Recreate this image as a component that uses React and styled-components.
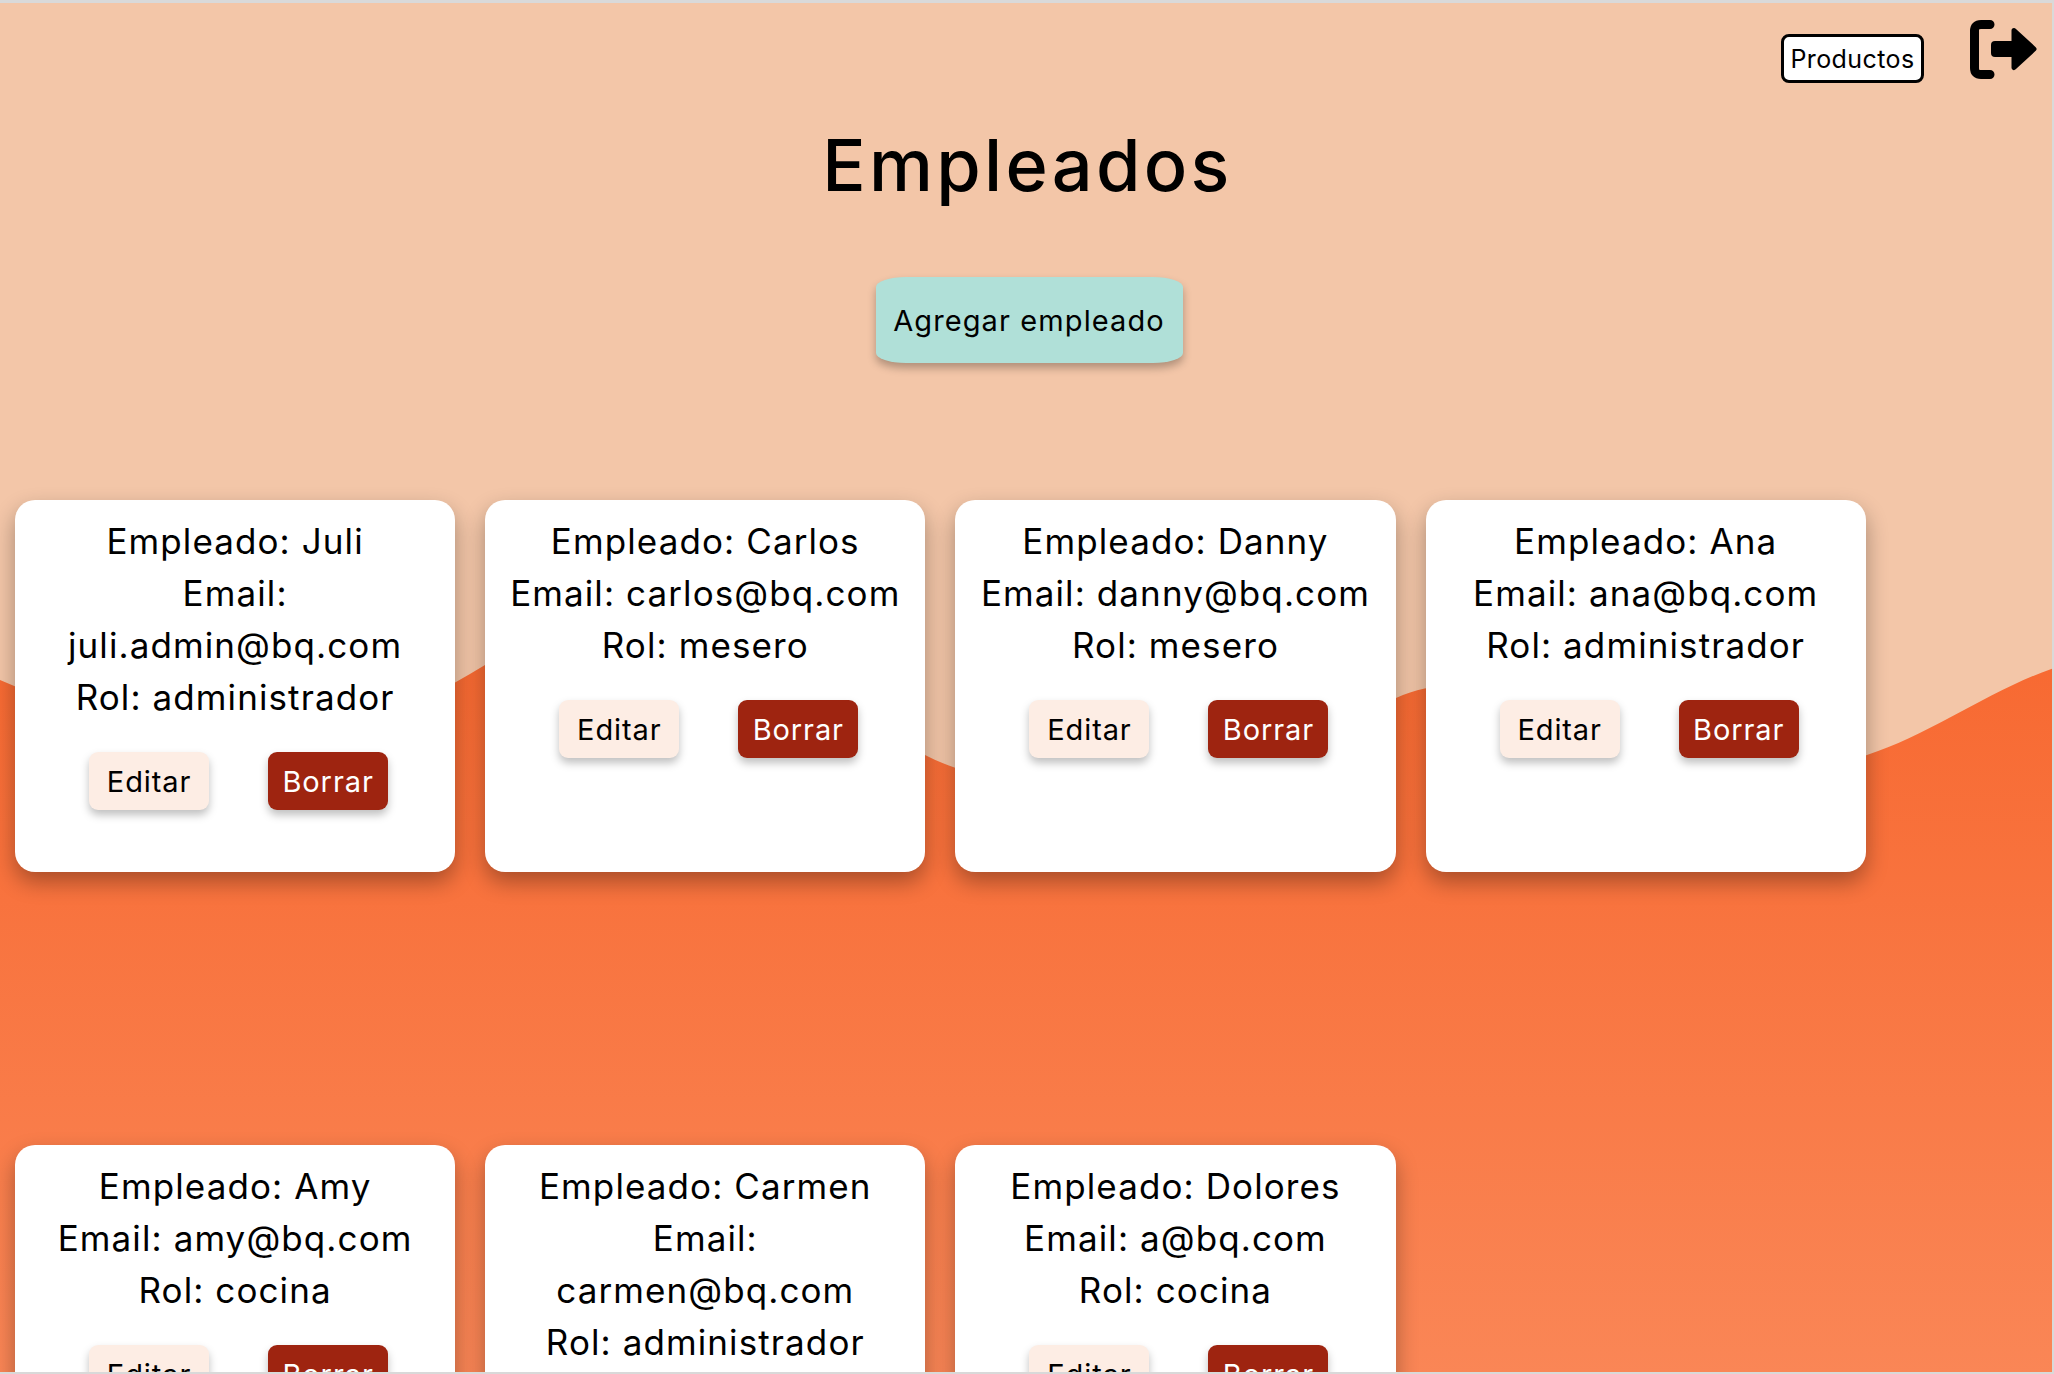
import React from 'react'
import styled, { createGlobalStyle } from 'styled-components'

const employees = [
  { name: 'Juli', email: 'juli.admin@bq.com', role: 'administrador' },
  { name: 'Carlos', email: 'carlos@bq.com', role: 'mesero' },
  { name: 'Danny', email: 'danny@bq.com', role: 'mesero' },
  { name: 'Ana', email: 'ana@bq.com', role: 'administrador' },
  { name: 'Amy', email: 'amy@bq.com', role: 'cocina' },
  { name: 'Carmen', email: 'carmen@bq.com', role: 'administrador' },
  { name: 'Dolores', email: 'a@bq.com', role: 'cocina' },
]

function Wave() {
  return (
    <WaveSvg viewBox="0 0 2054 1374" preserveAspectRatio="none">
      <defs>
        <linearGradient id="waveFill" x1="0" y1="0" x2="0" y2="1">
          <stop offset="0" stopColor="#f76830" />
          <stop offset="1" stopColor="#fa8656" />
        </linearGradient>
      </defs>
      <path
        d="M0 680 C 150 745, 300 780, 485 665 C 640 570, 780 670, 925 755 C 1040 815, 1240 770, 1396 698 C 1520 640, 1700 810, 1867 755 C 1930 735, 1990 690, 2054 668 L 2054 1374 L 0 1374 Z"
        fill="url(#waveFill)"
      />
    </WaveSvg>
  )
}

function LogoutIcon() {
  return (
    <LogoutSvg viewBox="0 0 67 59">
      <path
        d="M20 4.5 H11 Q4.5 4.5 4.5 11 V48 Q4.5 54.5 11 54.5 H20"
        fill="none"
        stroke="#000"
        strokeWidth="9"
        strokeLinecap="round"
      />
      <rect x="21" y="21" width="26" height="16" rx="4" fill="#000" />
      <path
        d="M44 10.5 L64 29 L44 47.5 Z"
        fill="#000"
        stroke="#000"
        strokeWidth="5"
        strokeLinejoin="round"
      />
    </LogoutSvg>
  )
}

function EmployeeCard({ employee }) {
  return (
    <Card>
      <CardText>Empleado: {employee.name}</CardText>
      <CardText>Email: {employee.email}</CardText>
      <CardText>Rol: {employee.role}</CardText>
      <CardButtons>
        <ActionButton>Editar</ActionButton>
        <ActionButton $danger>Borrar</ActionButton>
      </CardButtons>
    </Card>
  )
}

export default function App() {
  return (
    <Page>
      <GlobalStyle />
      <Wave />
      <TopBar>
        <ProductsButton>Productos</ProductsButton>
        <LogoutIcon />
      </TopBar>
      <Title>Empleados</Title>
      <AddRow>
        <AddButton>Agregar empleado</AddButton>
      </AddRow>
      <CardGrid>
        {employees.map((employee) => (
          <EmployeeCard key={employee.name} employee={employee} />
        ))}
      </CardGrid>
    </Page>
  )
}

const GlobalStyle = createGlobalStyle`
  html, body {
    margin: 0;
    padding: 0;
    background: #d9d9d9;
  }
  * {
    box-sizing: border-box;
  }
`

const Page = styled.div`
  position: relative;
  width: 2052px;
  height: 1369px;
  margin-top: 3px;
  overflow: hidden;
  background: #f3c6a8;
  font-family: Inter, "Noto Sans", sans-serif;
  color: #000;
`

const WaveSvg = styled.svg`
  position: absolute;
  top: -3px;
  left: 0;
  width: 2054px;
  height: 1374px;
`

const TopBar = styled.div`
  position: relative;
  display: flex;
  justify-content: flex-end;
  align-items: flex-start;
  height: 84px;
  padding-right: 15px;
`

const ProductsButton = styled.button`
  width: 143px;
  height: 49px;
  margin-top: 31px;
  margin-right: 46px;
  padding: 0;
  border: 3px solid #000;
  border-radius: 8px;
  background: #fff;
  color: #000;
  font-family: inherit;
  font-size: 25px;
  letter-spacing: 0.4px;
`

const LogoutSvg = styled.svg`
  width: 67px;
  height: 59px;
  margin-top: 17px;
`

const Title = styled.h1`
  position: relative;
  margin: 34px 0 0;
  padding-left: 3px;
  text-align: center;
  font-size: 72px;
  line-height: 88px;
  font-weight: 500;
  letter-spacing: 3.3px;
`

const AddRow = styled.div`
  position: relative;
  display: flex;
  justify-content: center;
  margin-top: 68px;
  padding-left: 6px;
`

const AddButton = styled.button`
  width: 307px;
  height: 86px;
  padding: 0;
  border: none;
  border-radius: 30px / 10px;
  background: #b0e0d8;
  color: #000;
  font-family: inherit;
  font-size: 29px;
  letter-spacing: 1.1px;
  box-shadow: 0 5px 8px rgba(0, 0, 0, 0.28);
`

const CardGrid = styled.div`
  position: relative;
  display: flex;
  flex-wrap: wrap;
  gap: 273px 30px;
  margin-top: 137px;
  padding: 0 15px;
`

const Card = styled.div`
  width: 440.2px;
  height: 372px;
  padding: 15px 20px 0;
  border-radius: 20px;
  background: #fff;
  text-align: center;
  box-shadow: 0 10px 22px rgba(0, 0, 0, 0.32);
`

const CardText = styled.p`
  margin: 0;
  font-size: 35px;
  line-height: 52px;
  letter-spacing: 1.1px;
`

const CardButtons = styled.div`
  display: flex;
  justify-content: center;
  gap: 59px;
  margin-top: 29px;
  padding-left: 7px;
`

const ActionButton = styled.button`
  width: 120px;
  height: 58px;
  padding: 0;
  border: none;
  border-radius: 9px;
  background: ${(props) => (props.$danger ? '#9e2410' : '#fdede4')};
  color: ${(props) => (props.$danger ? '#fff' : '#000')};
  font-family: inherit;
  font-size: 29px;
  letter-spacing: 0.9px;
  box-shadow: 0 5px 8px rgba(0, 0, 0, 0.25);
`
